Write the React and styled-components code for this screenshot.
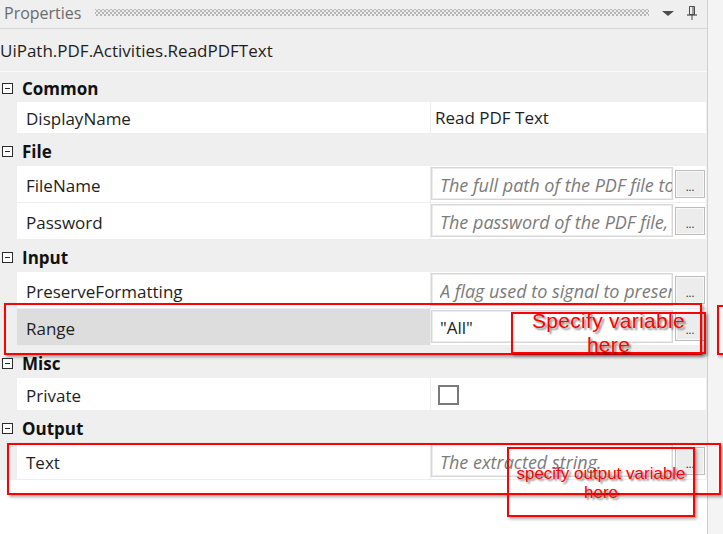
import React from 'react'
import styled, { createGlobalStyle } from 'styled-components'

const GlobalStyle = createGlobalStyle`
  html, body {
    margin: 0;
    padding: 0;
  }
  body {
    font-family: "Open Sans", "Noto Sans", "DejaVu Sans", sans-serif;
    font-size: 17px;
    color: #1e1e1e;
  }
`

const categories = [
  {
    name: 'Common',
    height: 30,
    rows: [{ label: 'DisplayName', text: 'Read PDF Text', height: 32 }],
  },
  {
    name: 'File',
    rows: [
      { label: 'FileName', hint: 'The full path of the PDF file to be read.', height: 37 },
      { label: 'Password', hint: 'The password of the PDF file, if necessary.', height: 37 },
    ],
  },
  {
    name: 'Input',
    rows: [
      { label: 'PreserveFormatting', hint: 'A flag used to signal to preserve the formatting.', height: 37 },
      { label: 'Range', value: '"All"', height: 37, selected: true },
    ],
  },
  {
    name: 'Misc',
    rows: [{ label: 'Private', check: true, height: 33 }],
  },
  {
    name: 'Output',
    rows: [{ label: 'Text', hint: 'The extracted string.', height: 37 }],
  },
]

const PinIcon = () => (
  <svg width="12" height="16" viewBox="0 0 12 16">
    <path d="M3.5 1.5h5v8h-5z" fill="none" stroke="#4a4a4a" />
    <path d="M7 2v7.5" stroke="#4a4a4a" />
    <path d="M1 10h10" stroke="#4a4a4a" strokeWidth="1.2" />
    <path d="M6 10v5" stroke="#4a4a4a" />
  </svg>
)

const App = () => {
  return (
    <Page>
      <GlobalStyle />
      <Panel>
        <TitleBar>
          <Title>Properties</Title>
          <Gripper />
          <DropArrow />
          <PinIcon />
        </TitleBar>
        <Subtitle>UiPath.PDF.Activities.ReadPDFText</Subtitle>
        <Grid>
          {categories.map((cat) => (
            <React.Fragment key={cat.name}>
              <CategoryHeader $h={cat.height || 32}>
                <Toggle />
                <CategoryName>{cat.name}</CategoryName>
              </CategoryHeader>
              {cat.rows.map((row) => (
                <Row key={row.label} $h={row.height}>
                  <Label $selected={row.selected}>{row.label}</Label>
                  <Value>
                    {row.text && <PlainValue>{row.text}</PlainValue>}
                    {row.check && <Checkbox />}
                    {(row.hint || row.value) && (
                      <>
                        <ValueBox $hint={!!row.hint}>
                          <ValueText>{row.hint || row.value}</ValueText>
                        </ValueBox>
                        <DotsButton>...</DotsButton>
                      </>
                    )}
                  </Value>
                </Row>
              ))}
            </React.Fragment>
          ))}
          <Filler />
        </Grid>
      </Panel>
      <Gutter />

      <Mark $left={4} $top={303} $w={698} $h={52} />
      <Mark $left={717} $top={305} $w={40} $h={50} />
      <Mark $left={511} $top={312} $w={195} $h={42}>
        <Note $pad={-5} $size={21} $lh={24} $ls={0.3}>Specify variable<br />here</Note>
      </Mark>
      <Mark $left={7} $top={443} $w={714} $h={52} />
      <Mark $left={507} $top={447} $w={188} $h={70}>
        <Note $pad={15} $size={17} $lh={19}>specify output variable<br />here</Note>
      </Mark>
    </Page>
  )
}

export default App

const Page = styled.div`
  position: relative;
  display: flex;
  width: 723px;
  height: 534px;
  overflow: hidden;
  background: #f4f4f4;
`

const Panel = styled.div`
  width: 707px;
  display: flex;
  flex-direction: column;
  background: #efefef;
  border-right: 1px solid #d0d0d0;
`

const Gutter = styled.div`
  flex: 1;
  background: #f4f4f4;
`

const TitleBar = styled.div`
  height: 29px;
  box-sizing: border-box;
  display: flex;
  align-items: center;
  padding: 0 9px 3px 4px;
  border-bottom: 1px solid #d6d6d6;
`

const Title = styled.span`
  color: #6b6b6b;
  font-size: 16px;
`

const Gripper = styled.div`
  flex: 1;
  height: 7px;
  margin: 0 13px 0 14px;
  background:
    radial-gradient(circle, #b4b4b4 0.7px, transparent 1px) 0 0 / 4px 4px,
    radial-gradient(circle, #b4b4b4 0.7px, transparent 1px) 2px 2px / 4px 4px;
`

const DropArrow = styled.div`
  width: 0;
  height: 0;
  border-left: 6px solid transparent;
  border-right: 6px solid transparent;
  border-top: 5px solid #4d4d4d;
  margin: 2px 12px 0 0;
`

const Subtitle = styled.div`
  height: 42px;
  display: flex;
  align-items: center;
  border-bottom: 1px solid #fafafa;
  font-size: 17px;
  color: #1e1e1e;
`

const Grid = styled.div`
  flex: 1;
  display: flex;
  flex-direction: column;
`

const CategoryHeader = styled.div`
  height: ${(p) => p.$h}px;
  box-sizing: border-box;
  display: flex;
  align-items: center;
  gap: 9px;
  padding: 2px 0 0 2px;
`

const Toggle = styled.span`
  position: relative;
  width: 9px;
  height: 9px;
  border: 1px solid #2b2b2b;
  background: #fff;
  &:after {
    content: "";
    position: absolute;
    left: 2px;
    right: 2px;
    top: 4px;
    height: 1px;
    background: #2b2b2b;
  }
`

const CategoryName = styled.span`
  font-weight: 700;
  font-size: 17px;
  color: #111;
`

const Row = styled.div`
  height: ${(p) => p.$h}px;
  box-sizing: border-box;
  margin: 0 1px 0 17px;
  display: grid;
  grid-template-columns: 413px 1fr;
  background: #fff;
  border-bottom: 1px solid #eeeeee;
`

const Label = styled.div`
  display: flex;
  align-items: center;
  padding: 2px 0 0 9px;
  background: ${(p) => (p.$selected ? '#dddddd' : '#fff')};
  color: #1e1e1e;
`

const Value = styled.div`
  display: flex;
  align-items: center;
  gap: 2px;
  padding-right: 1px;
  border-left: 1px solid #ececec;
  min-width: 0;
`

const PlainValue = styled.span`
  padding: 0 0 0 4px;
`

const ValueBox = styled.div`
  flex: 1;
  min-width: 0;
  align-self: stretch;
  margin: 1px 0 2px;
  display: flex;
  align-items: center;
  padding: 2px 0 0 8px;
  border: 1px solid #d6d6d6;
  box-shadow: inset 0 0 0 1px #ececec;
  overflow: hidden;
  font-style: ${(p) => (p.$hint ? 'italic' : 'normal')};
  font-size: ${(p) => (p.$hint ? '18px' : '17px')};
  color: ${(p) => (p.$hint ? '#7b7b7b' : '#1e1e1e')};
`

const ValueText = styled.span`
  white-space: nowrap;
  overflow: hidden;
  text-overflow: clip;
  min-width: 0;
`

const DotsButton = styled.div`
  width: 30px;
  height: 28px;
  box-sizing: border-box;
  flex: none;
  display: flex;
  align-items: flex-end;
  justify-content: center;
  padding-bottom: 5px;
  font-size: 11px;
  line-height: 1;
  color: #222;
  background: #ececec;
  border: 1px solid #bcbcbc;
  box-shadow: inset 0 0 0 1px #f8f8f8;
`

const Checkbox = styled.span`
  width: 17px;
  height: 16px;
  margin: 2px 0 0 7px;
  border: 2px solid #7a7a7a;
  background: #fff;
`

const Filler = styled.div`
  flex: 1;
  background: #fff;
`

const Mark = styled.div`
  position: absolute;
  left: ${(p) => p.$left}px;
  top: ${(p) => p.$top}px;
  width: ${(p) => p.$w}px;
  height: ${(p) => p.$h}px;
  box-sizing: border-box;
  border: 2px solid #ff0000;
  box-shadow: 2px 2px 3px rgba(0, 0, 0, 0.35);
  text-align: center;
`

const Note = styled.div`
  margin-top: ${(p) => p.$pad}px;
  font-family: "Liberation Sans", Arial, sans-serif;
  font-size: ${(p) => p.$size}px;
  line-height: ${(p) => p.$lh}px;
  letter-spacing: ${(p) => p.$ls || 0}px;
  color: #ff0000;
  text-shadow: 2px 2px 2px rgba(0, 0, 0, 0.45);
`
